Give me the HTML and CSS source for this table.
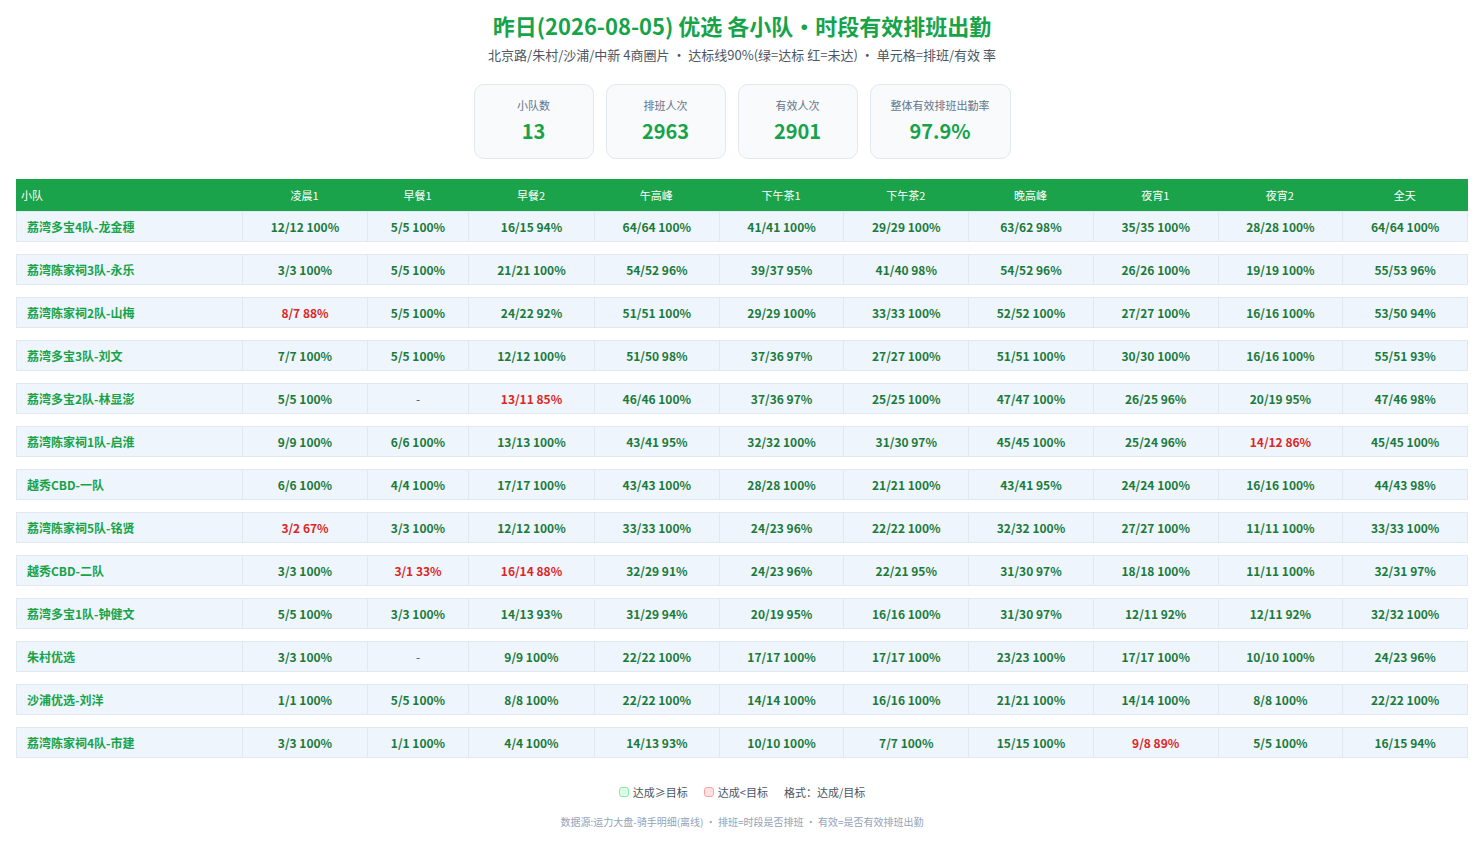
FILE: index.html
```html
<!DOCTYPE html>
<html lang="zh-CN">
<head>
<meta charset="utf-8">
<title>昨日优选 各小队・时段有效排班出勤</title>
<link rel="stylesheet" href="styles.css">
</head>
<body>
<div class="page">
  <h1 class="title">昨日(2026-08-05) 优选 各小队・时段有效排班出勤</h1>
  <div class="subtitle">北京路/朱村/沙浦/中新 4商圈片 ・ 达标线90%(绿=达标 红=未达) ・ 单元格=排班/有效 率</div>

  <div class="cards">
    <div class="card"><div class="card-label">小队数</div><div class="card-value">13</div></div>
    <div class="card"><div class="card-label">排班人次</div><div class="card-value">2963</div></div>
    <div class="card"><div class="card-label">有效人次</div><div class="card-value">2901</div></div>
    <div class="card wide"><div class="card-label">整体有效排班出勤率</div><div class="card-value">97.9%</div></div>
  </div>

  <div class="table">
    <div class="thead">
      <div class="th first">小队</div>
      <div class="th">凌晨1</div><div class="th">早餐1</div><div class="th">早餐2</div><div class="th">午高峰</div><div class="th">下午茶1</div><div class="th">下午茶2</div><div class="th">晚高峰</div><div class="th">夜宵1</div><div class="th">夜宵2</div><div class="th">全天</div>
    </div>
    <div class="tbody" id="tbody"></div>
  </div>

  <div class="legend">
    <span class="sw ok"></span><span class="lg">达成≥目标</span>
    <span class="sw bad"></span><span class="lg">达成&lt;目标</span>
    <span class="lg fmt">格式：达成/目标</span>
  </div>
  <div class="footer">数据源:运力大盘-骑手明细(离线) ・ 排班=时段是否排班 ・ 有效=是否有效排班出勤</div>
</div>
<script src="app.js"></script>
</body>
</html>
```

FILE: app.js
```js
const rows = [
  ["荔湾多宝4队-龙金穗", "12/12 100%", "5/5 100%", "16/15 94%", "64/64 100%", "41/41 100%", "29/29 100%", "63/62 98%", "35/35 100%", "28/28 100%", "64/64 100%"],
  ["荔湾陈家祠3队-永乐", "3/3 100%", "5/5 100%", "21/21 100%", "54/52 96%", "39/37 95%", "41/40 98%", "54/52 96%", "26/26 100%", "19/19 100%", "55/53 96%"],
  ["荔湾陈家祠2队-山梅", "8/7 88%", "5/5 100%", "24/22 92%", "51/51 100%", "29/29 100%", "33/33 100%", "52/52 100%", "27/27 100%", "16/16 100%", "53/50 94%"],
  ["荔湾多宝3队-刘文", "7/7 100%", "5/5 100%", "12/12 100%", "51/50 98%", "37/36 97%", "27/27 100%", "51/51 100%", "30/30 100%", "16/16 100%", "55/51 93%"],
  ["荔湾多宝2队-林显澎", "5/5 100%", "-", "13/11 85%", "46/46 100%", "37/36 97%", "25/25 100%", "47/47 100%", "26/25 96%", "20/19 95%", "47/46 98%"],
  ["荔湾陈家祠1队-启淮", "9/9 100%", "6/6 100%", "13/13 100%", "43/41 95%", "32/32 100%", "31/30 97%", "45/45 100%", "25/24 96%", "14/12 86%", "45/45 100%"],
  ["越秀CBD-一队", "6/6 100%", "4/4 100%", "17/17 100%", "43/43 100%", "28/28 100%", "21/21 100%", "43/41 95%", "24/24 100%", "16/16 100%", "44/43 98%"],
  ["荔湾陈家祠5队-铭贤", "3/2 67%", "3/3 100%", "12/12 100%", "33/33 100%", "24/23 96%", "22/22 100%", "32/32 100%", "27/27 100%", "11/11 100%", "33/33 100%"],
  ["越秀CBD-二队", "3/3 100%", "3/1 33%", "16/14 88%", "32/29 91%", "24/23 96%", "22/21 95%", "31/30 97%", "18/18 100%", "11/11 100%", "32/31 97%"],
  ["荔湾多宝1队-钟健文", "5/5 100%", "3/3 100%", "14/13 93%", "31/29 94%", "20/19 95%", "16/16 100%", "31/30 97%", "12/11 92%", "12/11 92%", "32/32 100%"],
  ["朱村优选", "3/3 100%", "-", "9/9 100%", "22/22 100%", "17/17 100%", "17/17 100%", "23/23 100%", "17/17 100%", "10/10 100%", "24/23 96%"],
  ["沙浦优选-刘洋", "1/1 100%", "5/5 100%", "8/8 100%", "22/22 100%", "14/14 100%", "16/16 100%", "21/21 100%", "14/14 100%", "8/8 100%", "22/22 100%"],
  ["荔湾陈家祠4队-市建", "3/3 100%", "1/1 100%", "4/4 100%", "14/13 93%", "10/10 100%", "7/7 100%", "15/15 100%", "9/8 89%", "5/5 100%", "16/15 94%"]
];
const tbody = document.getElementById("tbody");
rows.forEach(r => {
  const tr = document.createElement("div");
  tr.className = "tr";
  r.forEach((v, i) => {
    const td = document.createElement("div");
    if (i === 0) {
      td.className = "td name";
    } else if (v === "-") {
      td.className = "td dash";
    } else {
      const pct = parseInt(v.split(" ")[1], 10);
      td.className = "td " + (pct >= 90 ? "ok" : "bad");
    }
    td.textContent = v;
    tr.appendChild(td);
  });
  tbody.appendChild(tr);
});
```

FILE: styles.css
```css
* { box-sizing: border-box; }
html, body { margin: 0; padding: 0; background: #ffffff; }
body {
  font-family: "Noto Sans CJK SC", "Noto Sans", sans-serif;
  color: #334155;
}
.page {
  padding: 9px 16px 0;
  display: flex;
  flex-direction: column;
  align-items: center;
}
.title {
  margin: 0;
  font-size: 22px;
  line-height: 32px;
  font-weight: 700;
  color: #16a34a;
  text-align: center;
}
.subtitle {
  margin-top: 5px;
  font-size: 13px;
  line-height: 18px;
  color: #4b5563;
  text-align: center;
}
.cards {
  margin-top: 20px;
  display: flex;
  gap: 12px;
  justify-content: center;
}
.card {
  width: 120px;
  height: 75px;
  border: 1px solid #e2e8f0;
  border-radius: 10px;
  background: #f8fafc;
  display: flex;
  flex-direction: column;
  align-items: center;
  padding-top: 11px;
}
.card.wide { width: 141px; }
.card-label {
  font-size: 11px;
  line-height: 18px;
  color: #64748b;
}
.card-value {
  margin-top: 3px;
  font-size: 20px;
  line-height: 28px;
  font-weight: 700;
  color: #16a34a;
}
.table {
  margin-top: 20px;
  width: 1452px;
  display: flex;
  flex-direction: column;
}
.thead, .tr {
  display: grid;
  grid-template-columns: 225px 125px 101px 126px repeat(7, 1fr);
}
.thead {
  background: #1aa34a;
  height: 32px;
  padding: 0 1px;
}
.th {
  color: #ffffff;
  font-size: 11px;
  line-height: 32px;
  text-align: center;
}
.th.first { text-align: left; padding-left: 4px; }
.tbody {
  display: flex;
  flex-direction: column;
  gap: 12px;
}
.tr {
  height: 31px;
  background: #eef5fd;
  border: 1px solid #e2e8f0;
}
.td {
  font-size: 12px;
  font-weight: 700;
  line-height: 29px;
  text-align: center;
  border-left: 1px solid #e2e8f0;
  white-space: nowrap;
}
.td.name {
  border-left: none;
  text-align: left;
  padding-left: 10px;
  color: #16a34a;
}
.td.ok { color: #1b7a3a; }
.td.bad { color: #dc2626; }
.td.dash { color: #475569; font-weight: 400; }
.legend {
  margin-top: 26px;
  display: flex;
  align-items: center;
  font-size: 11px;
  line-height: 16px;
  color: #4b5563;
}
.sw {
  width: 10px;
  height: 10px;
  border-radius: 3px;
  margin-right: 4px;
}
.sw.ok { background: #dcfce7; border: 1px solid #86efac; }
.sw.bad { background: #fee2e2; border: 1px solid #fca5a5; }
.lg { margin-right: 16px; }
.lg.fmt { margin-right: 0; }
.footer {
  margin-top: 15px;
  font-size: 10px;
  line-height: 14px;
  color: #94a3b8;
}
```
